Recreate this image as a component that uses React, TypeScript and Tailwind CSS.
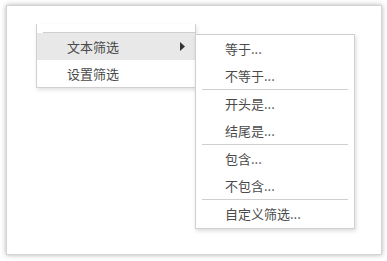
import React from 'react';

const font = { fontFamily: '"Noto Sans CJK SC", "Noto Sans", sans-serif' };

const groups: string[][] = [
	['等于...', '不等于...'],
	['开头是...', '结尾是...'],
	['包含...', '不包含...'],
	['自定义筛选...'],
];

const App: React.FC = () => {
	return (
		<div className="w-[387px] h-[261px] bg-white pt-[5px] pl-[6px]" style={font}>
			<div className="relative w-[376px] h-[250px] bg-white border border-[#d4d4d4] shadow-[0_0_5px_rgba(0,0,0,0.3)]">
				{/* main menu */}
				<div className="absolute left-[29px] top-[18px] w-[160px] bg-white border-l border-r border-b border-[#d0d0d0] shadow-[1px_2px_4px_rgba(0,0,0,0.12)] text-[13px] text-[#4a4a4a]">
					<div className="h-[8px]"></div>
					<div className="ml-[6px] border-t border-[#cfcfcf]"></div>
					<div className="h-[27px] bg-[#e8e8e8] flex items-center pl-[30px] pr-[10px] justify-between">
						<span>文本筛选</span>
						<svg width="5" height="9" viewBox="0 0 5 9">
							<path d="M0 0 L5 4.5 L0 9 Z" fill="#333" />
						</svg>
					</div>
					<div className="h-[27px] flex items-center pl-[30px]">
						<span>设置筛选</span>
					</div>
				</div>

				{/* sub menu */}
				<div className="absolute left-[188px] top-[28px] w-[160px] bg-white border border-[#d0d0d0] shadow-[1px_2px_4px_rgba(0,0,0,0.15)] text-[13px] text-[#4a4a4a]">
					{groups.map((group, gi) => (
						<div key={gi}>
							{gi > 0 && <div className="mx-[6px] border-t border-[#cfcfcf]"></div>}
							{group.map((label, li) => (
								<div
									key={label}
									className={
										gi === groups.length - 1 && li === group.length - 1
											? 'h-[28px] flex items-center pl-[29px] pb-px'
											: 'h-[27px] flex items-center pl-[29px]'
									}
								>
									{label}
								</div>
							))}
						</div>
					))}
				</div>
			</div>
		</div>
	);
};

export default App;
